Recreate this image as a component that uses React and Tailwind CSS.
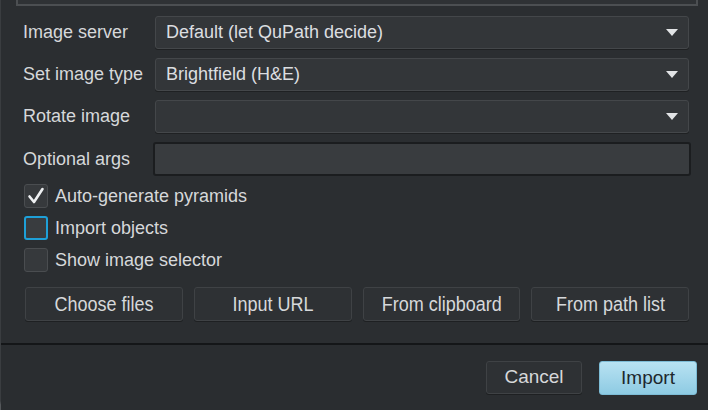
import React from 'react';

const fontStack = { fontFamily: '"Liberation Sans", Arial, sans-serif' };

function Caret() {
  return (
    <svg width="12" height="7" viewBox="0 0 12 7" className="shrink-0">
      <path d="M0 0 H12 L6 7 Z" fill="#e2e4e6" />
    </svg>
  );
}

function Combo({ value }) {
  return (
    <div className="h-[33px] flex items-center justify-between pl-[10px] pr-[10px] rounded-[3px] border border-[#44474a] bg-[#333639] shadow-[0_1px_0_#1f2123]">
      <span className="text-[18px] text-[#dcdee0] truncate">{value}</span>
      <Caret />
    </div>
  );
}

function Row({ label, children }) {
  return (
    <div className="flex items-center">
      <div className="w-[132px] shrink-0 text-[18px] text-[#d6d8da]">{label}</div>
      <div className="flex-1">{children}</div>
    </div>
  );
}

function Check({ label, checked, focused }) {
  return (
    <div className="flex items-center gap-[7px] h-[24px]">
      <div
        className={
          focused
            ? 'w-[24px] h-[24px] rounded-[3px] border-2 border-[#1ea0d8] bg-[#393c3f] flex items-center justify-center'
            : 'w-[24px] h-[24px] rounded-[3px] border border-[#4a4d50] bg-[#36393c] flex items-center justify-center'
        }
      >
        {checked && (
          <svg width="18" height="18" viewBox="0 0 18 18">
            <path d="M2.5 9.5 L7 15 L15.5 2" fill="none" stroke="#eef0f2" strokeWidth="2.6" strokeLinecap="round" strokeLinejoin="round" />
          </svg>
        )}
      </div>
      <span className="text-[18px] text-[#d6d8da]">{label}</span>
    </div>
  );
}

function SourceButton({ children }) {
  return (
    <button className="h-[34px] rounded-[3px] border border-[#3f4245] bg-[#2e3134] shadow-[0_1px_0_#1e2022] text-[#d6d8da] flex items-center justify-center">
      <span className="text-[20px] inline-block scale-x-[0.9]">{children}</span>
    </button>
  );
}

export default function App() {
  return (
    <div className="w-[708px] h-[410px] bg-[#55585b] overflow-hidden" style={fontStack}>
      <div className="w-full h-full bg-[#2b2e31] rounded-bl-[10px] border-l border-[#3a3d40] flex flex-col">
        {/* Panel above, cut off */}
        <div className="h-[6px] ml-[15px] mr-[10px] border-x-2 border-b-2 border-[#4c4f52] bg-[#2f3235] shrink-0" />

        <div className="flex-1 flex flex-col pl-[22px] pr-[19px]">
          {/* Form rows */}
          <div className="mt-[10px] flex flex-col gap-[9px]">
            <Row label="Image server">
              <Combo value="Default (let QuPath decide)" />
            </Row>
            <Row label="Set image type">
              <Combo value="Brightfield (H&E)" />
            </Row>
            <Row label="Rotate image">
              <Combo value="" />
            </Row>
            <Row label="Optional args">
              <div className="h-[34px] -ml-[2px] -mr-[2px] rounded-[3px] border-2 border-[#1b1d1f] bg-[#393c3f]" />
            </Row>
          </div>

          {/* Options */}
          <div className="mt-[8px] pl-[1px] flex flex-col gap-[8px]">
            <Check label="Auto-generate pyramids" checked />
            <Check label="Import objects" focused />
            <Check label="Show image selector" />
          </div>

          {/* Source buttons */}
          <div className="mt-[15px] pl-[2px] grid grid-cols-4 gap-[11px]">
            <SourceButton>Choose files</SourceButton>
            <SourceButton>Input URL</SourceButton>
            <SourceButton>From clipboard</SourceButton>
            <SourceButton>From path list</SourceButton>
          </div>
        </div>

        {/* Footer */}
        <div className="h-[67px] shrink-0 border-t-2 border-[#141618] bg-[#2a2d30] flex items-start justify-end gap-[17px] pt-[16px] pr-[11px]">
          <button className="w-[96px] h-[33px] rounded-[3px] border border-[#3f4245] bg-[#2e3134] shadow-[0_1px_0_#1e2022] text-[#d6d8da] text-[19px]">
            Cancel
          </button>
          <button className="w-[98px] h-[34px] rounded-[3px] border border-[#7dbcd6] bg-gradient-to-b from-[#b8e2f2] to-[#8ecbe3] text-[#1d272d] text-[19px]">
            Import
          </button>
        </div>
      </div>
    </div>
  );
}
